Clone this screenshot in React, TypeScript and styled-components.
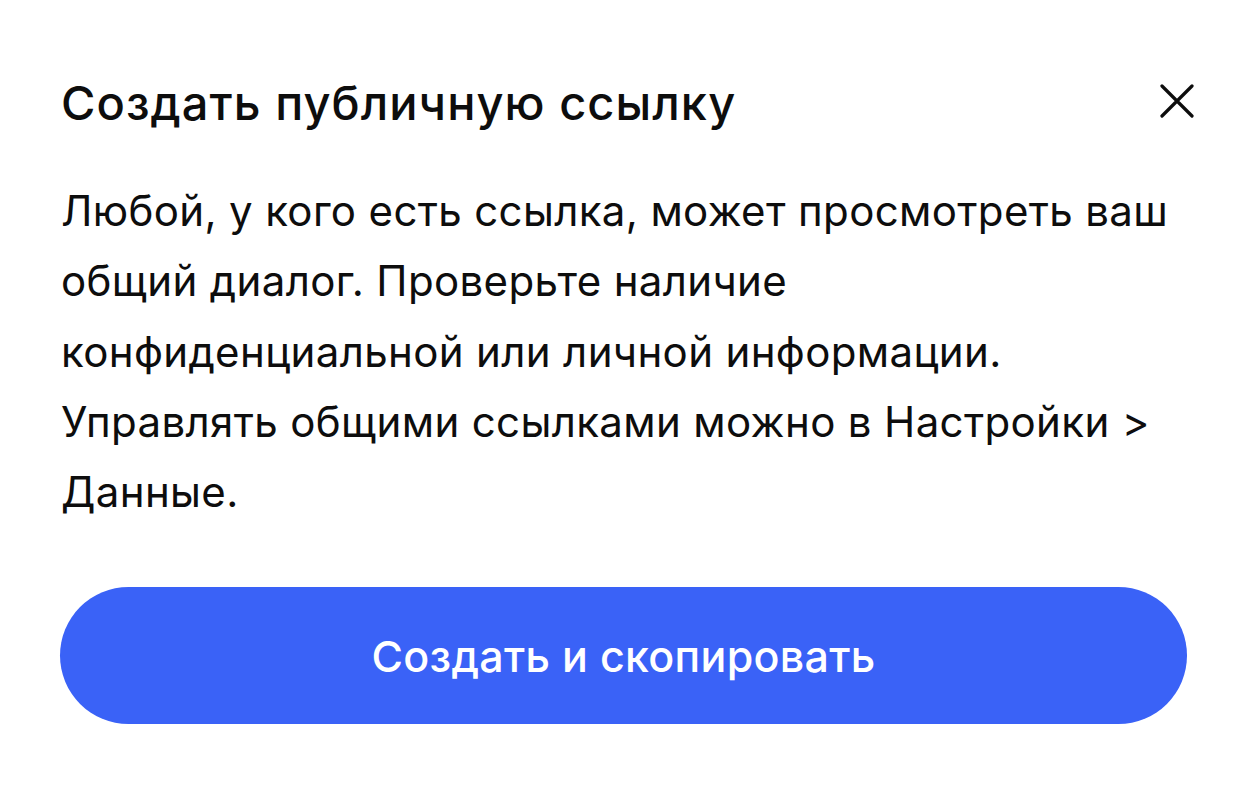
import styled, { createGlobalStyle } from "styled-components";

const GlobalStyle = createGlobalStyle`
  html, body {
    margin: 0;
    padding: 0;
    background: #ffffff;
  }
  body {
    font-family: Inter, "Noto Sans", "Liberation Sans", sans-serif;
    color: #0d0d0d;
    -webkit-font-smoothing: antialiased;
  }
`;

const Dialog = styled.div`
  box-sizing: border-box;
  width: 1260px;
  height: 792px;
  padding: 73px 73px 0 60px;
  display: flex;
  flex-direction: column;
  background: #ffffff;
`;

const Header = styled.div`
  display: flex;
  align-items: center;
  justify-content: space-between;
  height: 60px;
`;

const Title = styled.h2`
  margin: 0 0 0 1px;
  font-size: 47px;
  font-weight: 500;
  line-height: 60px;
  letter-spacing: 1.05px;
`;

const CloseButton = styled.button`
  display: flex;
  align-items: center;
  justify-content: center;
  width: 40px;
  height: 40px;
  margin: -4px -10px 0 0;
  padding: 0;
  border: none;
  background: transparent;
  color: #0d0d0d;
  cursor: pointer;
`;

const Description = styled.p`
  margin: 43px 0 0 1px;
  font-size: 42px;
  font-weight: 400;
  line-height: 70.3px;
  letter-spacing: 0.35px;
  white-space: nowrap;
`;

const PrimaryButton = styled.button`
  margin-top: 60px;
  height: 137px;
  width: 100%;
  border: none;
  border-radius: 70px;
  background: #3a62f7;
  color: #ffffff;
  font-family: inherit;
  font-size: 43px;
  font-weight: 500;
  letter-spacing: 0.3px;
  cursor: pointer;
`;

export default function App() {
  return (
    <>
      <GlobalStyle />
      <Dialog>
        <Header>
          <Title>Создать публичную ссылку</Title>
          <CloseButton aria-label="Закрыть">
            <svg width="34" height="34" viewBox="0 0 34 34" fill="none">
              <path
                d="M2 2L32 32M32 2L2 32"
                stroke="currentColor"
                strokeWidth="3.2"
                strokeLinecap="round"
              />
            </svg>
          </CloseButton>
        </Header>
        <Description>
          Любой, у кого есть ссылка, может просмотреть ваш
          <br />
          общий диалог. Проверьте наличие
          <br />
          конфиденциальной или личной информации.
          <br />
          Управлять общими ссылками можно в Настройки &gt;
          <br />
          Данные.
        </Description>
        <PrimaryButton>Создать и скопировать</PrimaryButton>
      </Dialog>
    </>
  );
}
